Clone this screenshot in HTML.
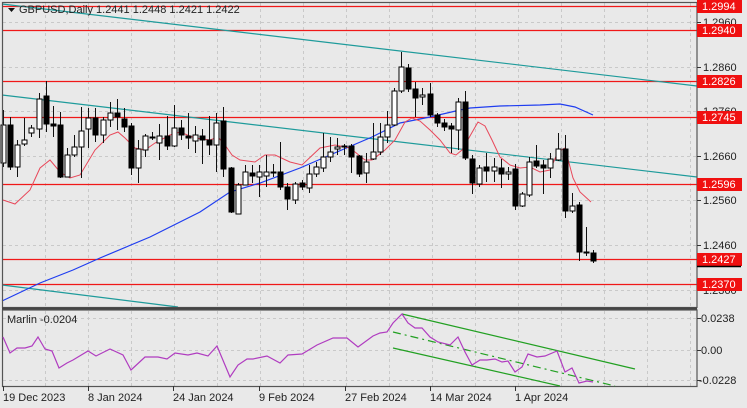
<!DOCTYPE html>
<html><head><meta charset="utf-8"><style>
html,body{margin:0;padding:0;background:#e9e9e9;width:747px;height:408px;overflow:hidden}
svg{display:block;font-family:"Liberation Sans",sans-serif}
</style></head><body>
<svg id="s" width="747" height="408" xmlns="http://www.w3.org/2000/svg"></svg>
<script>
var s=document.getElementById('s'),h='';
function L(x1,y1,x2,y2,c,w,d){h+='<line x1="'+x1+'" y1="'+y1+'" x2="'+x2+'" y2="'+y2+'" stroke="'+c+'" stroke-width="'+(w||1)+'"'+(d?' stroke-dasharray="'+d+'"':'')+'/>';}
function P(pts,c,w,d){h+='<polyline fill="none" stroke="'+c+'" stroke-width="'+(w||1)+'"'+(d?' stroke-dasharray="'+d+'"':'')+' points="'+pts.map(function(p){return p.join(',')}).join(' ')+'"/>';}
function T(x,y,t,c,a){h+='<text x="'+x+'" y="'+y+'" font-size="11" fill="'+(c||'#222')+'"'+(a?' text-anchor="'+a+'"':'')+'>'+t+'</text>';}
h+='<rect x="0" y="0" width="747" height="408" fill="#e9e9e9"/>';
// grid
for(var gx=45;gx<697;gx+=43){L(gx+.5,3,gx+.5,307,'#c9c9c9',1,'3,3');L(gx+.5,311,gx+.5,386,'#c9c9c9',1,'3,3');}
[22,67,111,156,200,245,290].forEach(function(y){L(3,y+.5,697,y+.5,'#c9c9c9',1,'3,3');});
[318,350,380].forEach(function(y){L(3,y+.5,697,y+.5,'#c9c9c9',1,'3,3');});
// red levels
var lv=[[6,'1.2994'],[30,'1.2940'],[81,'1.2826'],[117,'1.2745'],[184,'1.2596'],[259,'1.2427'],[284,'1.2370']];
lv.forEach(function(l){L(3,l[0]+.5,697,l[0]+.5,'#f01818',1.2);});
// teal channel
L(2,4,697,86,'#1e9b9b',1.2);L(2,95,697,177,'#1e9b9b',1.2);L(2,285,178,307,'#1e9b9b',1.2);
// blue MA
P([[2,301],[40,283],[73,270],[100,258],[150,237],[200,212],[230,192],[260,183],[300,168],[330,155],[372,137],[400,123],[430,117],[460,110],[470,108],[500,106],[540,105],[560,104],[575,107],[593,115]],'#1f3df0',1.2);
// red MA
P([[3,200],[15,204],[30,190],[40,168],[50,160],[60,172],[70,178],[80,175],[95,150],[110,135],[118,132],[125,138],[135,148],[145,150],[155,143],[170,135],[180,132],[195,138],[210,140],[218,137],[225,145],[232,155],[240,160],[255,162],[265,155],[275,155],[290,162],[302,165],[320,148],[335,145],[350,148],[365,160],[372,160],[385,150],[395,140],[405,122],[412,118],[420,121],[430,130],[440,140],[450,153],[456,155],[462,150],[470,136],[478,122],[485,126],[492,140],[500,157],[510,165],[520,168],[530,167],[540,172],[550,170],[558,152],[565,148],[573,178],[580,192],[591,202]],'#e8485a',1);
// candles [o,c,h,l]
var C=[[163,125,110,167],[125,167,117,170],[167,145,140,177],[144,140,118,146],[133,128,125,137],[129,99,93,138],[96,124,81,132],[124,126,106,137],[125,177,112,178],[177,155,148,177],[155,147,135,157],[147,131,107,178],[129,118,108,148],[118,135,108,142],[135,120,117,143],[120,113,102,127],[113,117,99,130],[119,127,108,132],[126,168,123,175],[168,149,140,183],[150,136,134,157],[137,137,132,140],[143,136,124,160],[136,146,116,150],[146,128,105,147],[128,135,120,140],[136,138,113,149],[141,135,126,153],[136,140,129,164],[140,145,116,155],[145,123,113,172],[121,169,107,177],[168,212,167,213],[214,185,183,214],[185,172,165,185],[173,176,165,183],[177,172,165,197],[176,172,155,187],[173,172,164,177],[172,187,142,190],[187,199,183,210],[200,184,182,204],[183,187,180,190],[188,174,165,193],[174,167,162,177],[168,157,133,172],[157,152,137,162],[149,147,138,155],[146,147,144,155],[146,157,144,173],[156,174,155,177],[173,162,153,183],[159,152,123,160],[152,137,123,155],[137,125,111,143],[125,91,88,126],[91,67,52,93],[68,89,64,92],[89,98,82,117],[97,95,88,105],[94,115,83,117],[115,123,113,127],[123,127,119,131],[126,129,123,153],[130,102,98,150],[102,158,91,160],[159,183,155,194],[184,168,165,187],[167,171,153,182],[171,167,158,182],[168,174,159,188],[174,172,167,180],[169,206,164,210],[206,194,192,207],[195,162,157,197],[161,166,145,168],[165,168,160,194],[168,159,153,178],[160,149,133,161],[149,211,135,218],[211,206,193,213],[205,252,202,261],[252,253,227,256],[253,261,250,263]];
C.forEach(function(c,i){var x=Math.round(3+7.11*i)+.5;L(x,c[2],x,c[3],'#111',1);
var t=Math.min(c[0],c[1]),b=Math.max(c[0],c[1]);if(b-t<1)b=t+1;
h+='<rect x="'+(x-2.5)+'" y="'+t+'" width="5" height="'+(b-t)+'" fill="'+(c[1]>c[0]?'#000':'#fff')+'" stroke="#000" stroke-width="1"/>';});
// pane borders
h+='<rect x="2.5" y="2.5" width="694.5" height="305" fill="none" stroke="#555" stroke-width="1.2"/>';
h+='<rect x="2.5" y="310" width="694.5" height="76.5" fill="none" stroke="#555" stroke-width="1.2"/>';
L(2,308.5,697,308.5,'#444',2);
// axis labels
[[22,'1.2960'],[67,'1.2860'],[111,'1.2760'],[156,'1.2660'],[200,'1.2560'],[245,'1.2460'],[290,'1.2360']].forEach(function(a){L(697,a[0]+.5,701,a[0]+.5,'#333');T(703,a[0]+4,a[1]);});
lv.forEach(function(l){h+='<rect x="697" y="'+(l[0]-6)+'" width="45" height="13" fill="#f01010"/>';T(702,l[0]+4,l[1],'#fff');});
L(697,266.5,741,266.5,'#000',1.5);
[[318,'0.0238'],[350,'0.00'],[380,'-0.0228']].forEach(function(a){L(697,a[0]+.5,701,a[0]+.5,'#333');T(a[1][0]=='-'?699:701,a[0]+4,a[1]);});
// indicator
T(7,323,'Marlin -0.0204','#222');
L(402,314,635,369,'#22a022',1.2);L(393,348,560,386,'#22a022',1.2);L(393,332,615,386,'#22a022',1.2,'8,4,2,4');
P([[3,337],[10,353],[17,348],[25,348],[32,346],[38,337],[45,349],[52,351],[59,368],[67,363],[73,360],[88,351],[96,356],[110,349],[123,355],[131,370],[145,357],[158,357],[167,359],[175,353],[188,355],[197,353],[208,356],[217,346],[230,377],[238,365],[247,359],[253,359],[267,356],[280,363],[288,355],[302,354],[317,345],[333,338],[347,338],[358,347],[373,336],[380,333],[387,332],[393,323],[402,314],[408,323],[415,328],[422,328],[430,337],[438,342],[450,345],[458,337],[465,352],[472,365],[480,360],[487,360],[495,359],[502,362],[508,361],[515,372],[522,367],[528,354],[537,357],[545,356],[557,351],[565,372],[572,368],[579,383],[587,381],[593,382]],'#b03cc0',1.2);
// dates
[[3,'19 Dec 2023'],[88,'8 Jan 2024'],[173,'24 Jan 2024'],[259,'9 Feb 2024'],[345,'27 Feb 2024'],[430,'14 Mar 2024'],[515,'1 Apr 2024']].forEach(function(d){L(d[0]+.5,386,d[0]+.5,391,'#333');T(d[0],401,d[1]);});
// header
h+='<path d="M8,8 L15,8 L11.5,12 Z" fill="#111"/>';
T(19,13,'GBPUSD,Daily  1.2441 1.2448 1.2421 1.2422','#222');
s.innerHTML=h;
</script>
</body></html>
